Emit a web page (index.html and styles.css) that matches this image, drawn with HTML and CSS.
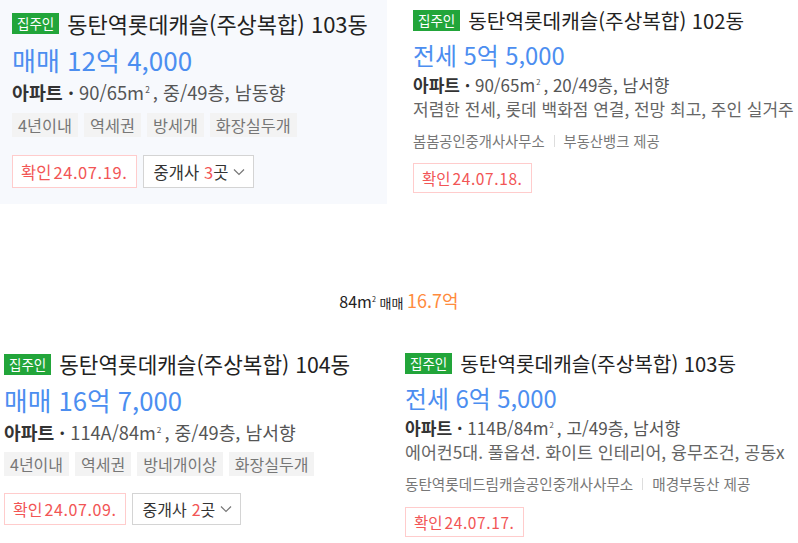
FILE: index.html
```html
<!DOCTYPE html>
<html lang="ko">

<head>
    <meta charset="UTF-8">
    <meta name="viewport" content="width=device-width, initial-scale=1.0">
    <title>매물 목록</title>
    <link rel="stylesheet" href="styles.css">
</head>

<body>
    <div class="row row-top">
        <div class="listing listing-lg listing-active">
            <div class="title-line">
                <span class="owner-tag">집주인</span>
                <span class="title">동탄역롯데캐슬(주상복합) 103동</span>
            </div>
            <div class="price">매매 12억 4,000</div>
            <div class="info"><strong>아파트 ·</strong> 90/65m<sup>2</sup>, 중/49층, 남동향</div>
            <div class="tags">
                <span>4년이내</span>
                <span>역세권</span>
                <span>방세개</span>
                <span>화장실두개</span>
            </div>
            <div class="actions">
                <span class="confirm">확인<em>24.07.19.</em></span>
                <span class="agents">중개사 <b>3</b>곳
                    <svg width="12" height="8" viewBox="0 0 12 8"><polyline points="1,1.5 6,6.5 11,1.5" fill="none" stroke="#777" stroke-width="1.2"/></svg>
                </span>
            </div>
        </div>

        <div class="listing listing-sm">
            <div class="title-line">
                <span class="owner-tag">집주인</span>
                <span class="title">동탄역롯데캐슬(주상복합) 102동</span>
            </div>
            <div class="price">전세 5억 5,000</div>
            <div class="info"><strong>아파트 ·</strong> 90/65m<sup>2</sup>, 20/49층, 남서향</div>
            <div class="desc">저렴한 전세, 롯데 백화점 연결, 전망 최고, 주인 실거주</div>
            <div class="source">봄봄공인중개사사무소<i></i>부동산뱅크 제공</div>
            <div class="actions">
                <span class="confirm">확인<em>24.07.18.</em></span>
            </div>
        </div>
    </div>

    <div class="summary"><span class="summary-area">84m<sup>2</sup></span> 매매 <span class="summary-price">16.7억</span></div>

    <div class="row row-bottom">
        <div class="listing listing-lg">
            <div class="title-line">
                <span class="owner-tag">집주인</span>
                <span class="title">동탄역롯데캐슬(주상복합) 104동</span>
            </div>
            <div class="price">매매 16억 7,000</div>
            <div class="info"><strong>아파트 ·</strong> 114A/84m<sup>2</sup>, 중/49층, 남서향</div>
            <div class="tags">
                <span>4년이내</span>
                <span>역세권</span>
                <span>방네개이상</span>
                <span>화장실두개</span>
            </div>
            <div class="actions">
                <span class="confirm">확인<em>24.07.09.</em></span>
                <span class="agents">중개사 <b>2</b>곳
                    <svg width="12" height="8" viewBox="0 0 12 8"><polyline points="1,1.5 6,6.5 11,1.5" fill="none" stroke="#777" stroke-width="1.2"/></svg>
                </span>
            </div>
        </div>

        <div class="listing listing-sm">
            <div class="title-line">
                <span class="owner-tag">집주인</span>
                <span class="title">동탄역롯데캐슬(주상복합) 103동</span>
            </div>
            <div class="price">전세 6억 5,000</div>
            <div class="info"><strong>아파트 ·</strong> 114B/84m<sup>2</sup>, 고/49층, 남서향</div>
            <div class="desc">에어컨5대. 풀옵션. 화이트 인테리어, 융무조건, 공동x</div>
            <div class="source">동탄역롯데드림캐슬공인중개사사무소<i></i>매경부동산 제공</div>
            <div class="actions">
                <span class="confirm">확인<em>24.07.17.</em></span>
            </div>
        </div>
    </div>
</body>

</html>
```

FILE: styles.css
```css
body {
    margin: 0;
    width: 798px;
    height: 543px;
    overflow: hidden;
    background-color: #fff;
    font-family: "Noto Sans CJK KR", "Noto Sans", sans-serif;
    color: #222;
}

.row {
    display: grid;
    grid-template-columns: 398px 400px;
    align-items: start;
}

.row-top {
    height: 204px;
}

.row-top .listing-lg {
    padding: 10px 0 0 12px;
}

.row-top .listing-sm {
    padding: 10px 0 0 15px;
}

.row-bottom {
    padding-top: 41px;
}

.row-bottom .listing-lg {
    padding: 0 0 0 4px;
}

.row-bottom .listing-sm {
    padding: 0 0 0 7px;
}

.listing {
    white-space: nowrap;
}

.listing-active {
    width: 387px;
    height: 204px;
    box-sizing: border-box;
    background-color: #f7f9fd;
}

.title-line {
    display: flex;
    align-items: center;
    gap: 8px;
    height: 26px;
}

.owner-tag {
    display: inline-block;
    padding: 0 5px;
    height: 21px;
    line-height: 21px;
    font-size: 13.5px;
    color: #fff;
    background-color: #22a53a;
}

.title {
    font-size: 22px;
    line-height: 26px;
    color: #222;
}

.price {
    margin-top: 8px;
    font-size: 26px;
    line-height: 32px;
    color: #4c8ef0;
}

.info {
    margin-top: 4px;
    font-size: 18.4px;
    line-height: 25px;
    color: #555;
}

.info strong {
    color: #333;
}

sup {
    font-size: 0.45em;
    line-height: 0;
    vertical-align: 0;
    position: relative;
    top: -0.9em;
    margin: 0 3px 0 1px;
}

.desc {
    font-size: 17px;
    line-height: 23px;
    color: #666;
}

.source {
    margin-top: 10px;
    font-size: 14.3px;
    line-height: 22px;
    color: #777;
}

.source i {
    display: inline-block;
    width: 1px;
    height: 12px;
    margin: 0 9px;
    background-color: #ddd;
}

.tags {
    display: flex;
    gap: 6px;
    margin-top: 8px;
}

.tags span {
    padding: 0 6px;
    font-size: 16.3px;
    line-height: 24px;
    color: #777;
    background-color: #f3f3f3;
}

.actions {
    display: flex;
    gap: 6px;
    margin-top: 18px;
}

.confirm,
.agents {
    display: inline-flex;
    align-items: center;
    height: 33px;
    padding: 0 8px;
    box-sizing: border-box;
    font-size: 16.5px;
    background-color: #fff;
}

.confirm {
    border: 1px solid #ffcccc;
    color: #f25555;
}

.confirm em {
    font-style: normal;
    margin-left: 2px;
    letter-spacing: 0.6px;
}

.agents {
    border: 1px solid #d4d4d4;
    color: #333;
    gap: 5px;
    padding: 0 8px 0 10px;
}

.agents b {
    font-weight: normal;
    color: #f25555;
    margin: 0 -5px 0 0;
}

.row-bottom .listing-lg .title-line {
    height: 22px;
}

.row-bottom .listing-lg .title {
    font-size: 21.3px;
}

.row-bottom .listing-lg .price {
    margin-top: 9px;
    font-size: 25.7px;
}

.row-bottom .listing-lg .info {
    margin-top: 4px;
    font-size: 18.2px;
    line-height: 24px;
}

.row-bottom .listing-lg .tags {
    margin-top: 8px;
}

.row-bottom .listing-lg .tags span {
    font-size: 16px;
}

.row-bottom .listing-lg .actions {
    margin-top: 17px;
}

.row-bottom .listing-lg .confirm,
.row-bottom .listing-lg .agents {
    height: 32px;
    font-size: 16px;
}

.listing-sm .title-line {
    height: 21px;
}

.listing-sm .title {
    font-size: 20.2px;
}

.listing-sm .price {
    margin-top: 9px;
    font-size: 23.8px;
    line-height: 30px;
}

.listing-sm .info {
    margin-top: 3px;
    font-size: 17px;
    line-height: 24px;
}

.listing-sm .actions {
    margin-top: 11px;
}

.listing-sm .confirm {
    height: 30px;
    font-size: 15.5px;
}

.row-bottom .listing-sm .info {
    font-size: 17.1px;
}

.row-bottom .listing-sm .desc {
    font-size: 17.3px;
    line-height: 24px;
}

.row-bottom .listing-sm .source {
    margin-top: 9px;
    font-size: 14.6px;
}

.row-bottom .listing-sm .actions {
    margin-top: 12px;
}

.summary {
    margin-top: 84px;
    height: 24px;
    line-height: 24px;
    text-align: center;
    font-size: 13px;
    color: #222;
}

.summary-area {
    font-size: 16px;
}

.summary-area sup {
    margin: 0;
}

.summary-price {
    font-size: 18px;
    color: #ff8b3d;
}
```
